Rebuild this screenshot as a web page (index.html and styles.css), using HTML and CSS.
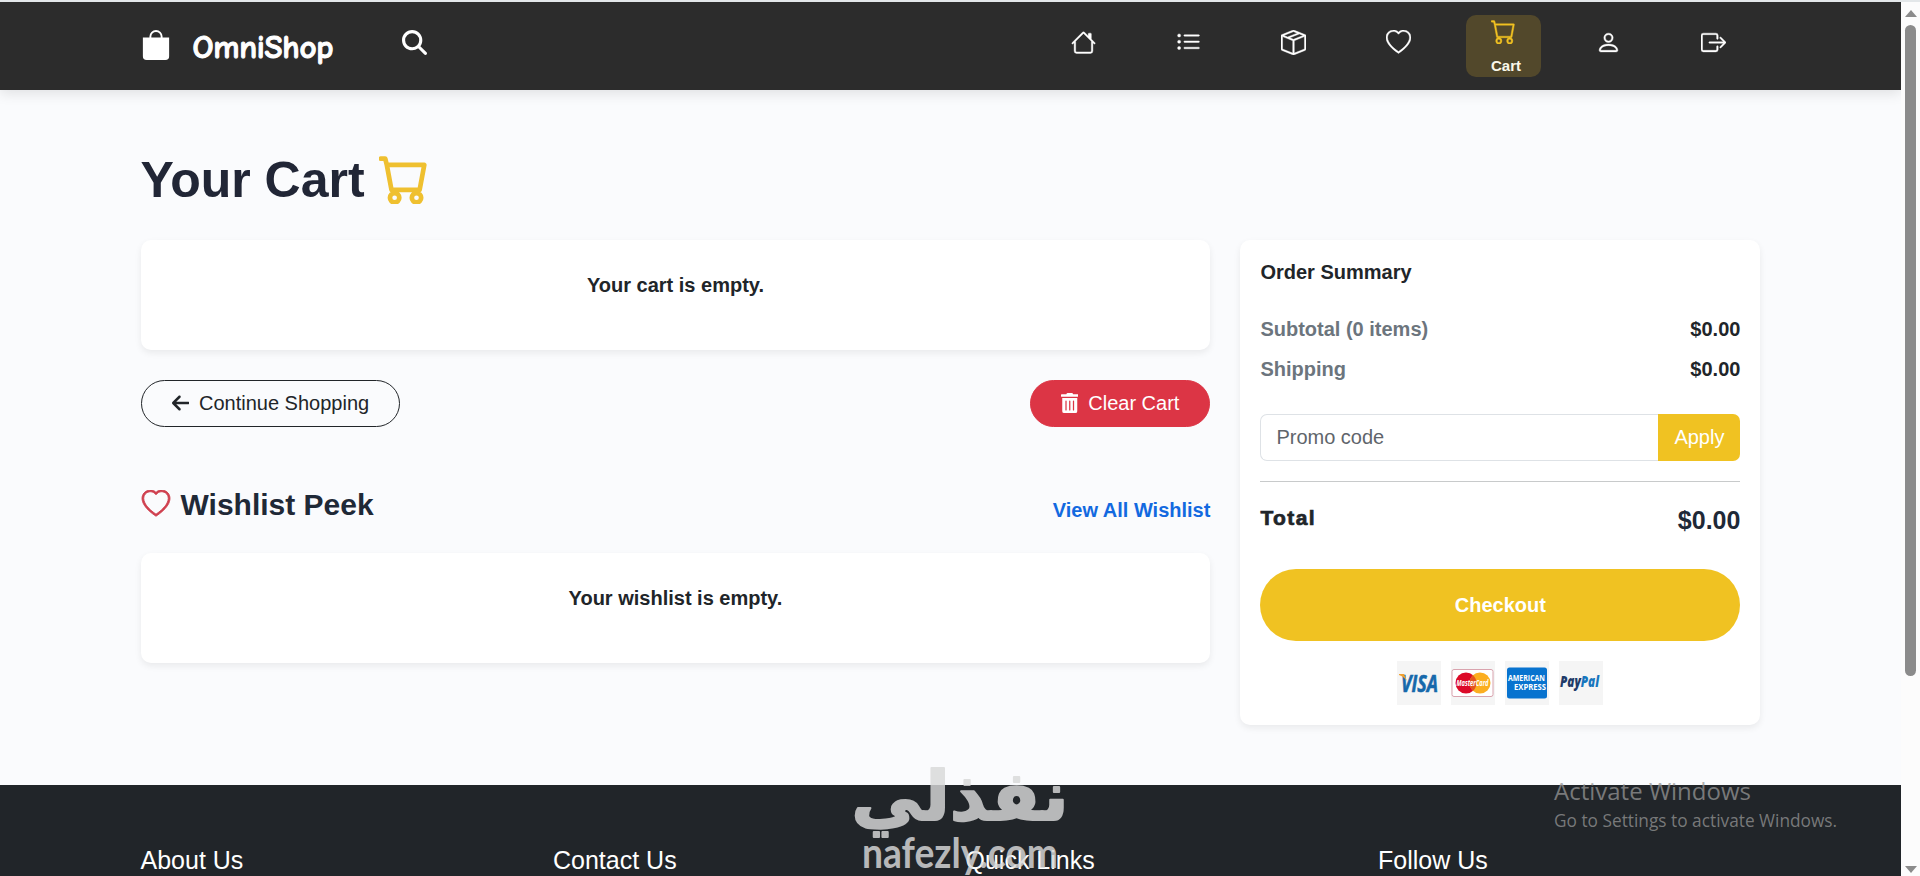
FILE: index.html
```
<!DOCTYPE html>
<html lang="en">
<head>
    <meta charset="UTF-8">
    <meta name="viewport" content="width=device-width, initial-scale=1.0">
    <title>OmniShop - Cart</title>
    <link rel="stylesheet" href="styles.css">
</head>
<body>
    <div class="page">
        <header class="navbar">
            <div class="container nav-inner">
                <a class="brand" href="#">
                    <svg class="brand-icon" viewBox="0 0 16 16"><path d="M8 1a2.500 2.500 0 0 1 2.500 2.500V4h-5v-.5A2.500 2.500 0 0 1 8 1m3.500 3v-.5a3.500 3.500 0 1 0-7 0V4H1v10a2 2 0 0 0 2 2h10a2 2 0 0 0 2-2V4z"/></svg>
                    <span class="brand-name">OmniShop</span>
                </a>
                <svg class="search" viewBox="0 0 512 512"><path d="M416 208c0 45.900-14.900 88.300-40 122.700L502.600 457.400c12.500 12.500 12.500 32.800 0 45.300s-32.800 12.500-45.300 0L330.700 376c-34.400 25.200-76.800 40-122.700 40C93.100 416 0 322.900 0 208S93.100 0 208 0S416 93.100 416 208zM208 352a144 144 0 1 0 0-288 144 144 0 1 0 0 288z"/></svg>
                <nav class="nav-links">
                    <a class="nav-item" href="#">
                        <svg viewBox="0 0 16 16"><path d="M8.707 1.500a1 1 0 0 0-1.414 0L.646 8.146a.5.5 0 0 0 .708.708L2 8.207V13.500A1.500 1.500 0 0 0 3.500 15h9a1.500 1.500 0 0 0 1.500-1.500V8.207l.646.647a.5.5 0 0 0 .708-.708L13 5.793V2.500a.5.5 0 0 0-.5-.5h-1a.5.5 0 0 0-.5.5v1.293zM13 7.207V13.500a.5.5 0 0 1-.5.5h-9a.5.5 0 0 1-.5-.5V7.207l5-5z"/></svg>
                    </a>
                    <a class="nav-item" href="#">
                        <svg viewBox="0 0 16 16"><path d="M5 11.500a.5.5 0 0 1 .5-.5h9a.5.5 0 0 1 0 1h-9a.5.5 0 0 1-.5-.5m0-4a.5.5 0 0 1 .5-.5h9a.5.5 0 0 1 0 1h-9a.5.5 0 0 1-.5-.5m0-4a.5.5 0 0 1 .5-.5h9a.5.5 0 0 1 0 1h-9a.5.5 0 0 1-.5-.5m-3 1a1 1 0 1 0 0-2 1 1 0 0 0 0 2m0 4a1 1 0 1 0 0-2 1 1 0 0 0 0 2m0 4a1 1 0 1 0 0-2 1 1 0 0 0 0 2"/></svg>
                    </a>
                    <a class="nav-item" href="#">
                        <svg viewBox="0 0 16 16"><path d="M8.186 1.113a.5.5 0 0 0-.372 0L1.846 3.500l2.404.961L10.404 2zm3.564 1.426L5.596 5 8 5.961 14.154 3.500zm3.250 1.700-6.500 2.600v7.922l6.500-2.600V4.240zM7.500 14.762V6.838L1 4.239v7.923zM7.443.184a1.500 1.500 0 0 1 1.114 0l7.129 2.852A.5.5 0 0 1 16 3.500v8.662a1 1 0 0 1-.629.928l-7.185 2.874a.5.5 0 0 1-.372 0L.63 13.090a1 1 0 0 1-.63-.928V3.500a.5.5 0 0 1 .314-.464z"/></svg>
                    </a>
                    <a class="nav-item" href="#">
                        <svg viewBox="0 0 16 16"><path d="m8 2.748-.717-.737C5.600.281 2.514.878 1.400 3.053c-.523 1.023-.641 2.500.314 4.385.920 1.815 2.834 3.989 6.286 6.357 3.452-2.368 5.365-4.542 6.286-6.357.955-1.886.838-3.362.314-4.385C13.486.878 10.400.280 8.717 2.010zM8 15C-7.333 4.868 3.279-3.040 7.824 1.143q.09.083.176.171a3 3 0 0 1 .176-.17C12.720-3.042 23.333 4.867 8 15"/></svg>
                    </a>
                    <a class="nav-item active" href="#">
                        <svg viewBox="0 0 16 16"><path d="M0 1.500A.5.5 0 0 1 .5 1H2a.5.5 0 0 1 .485.379L2.890 3H14.500a.5.5 0 0 1 .491.592l-1.500 8A.5.5 0 0 1 13 12H4a.5.5 0 0 1-.491-.408L2.010 3.607 1.610 2H.5a.5.5 0 0 1-.5-.5M3.102 4l1.313 7h8.170l1.313-7zM5 12a2 2 0 1 0 0 4 2 2 0 0 0 0-4m7 0a2 2 0 1 0 0 4 2 2 0 0 0 0-4m-7 1a1 1 0 1 1 0 2 1 1 0 0 1 0-2m7 0a1 1 0 1 1 0 2 1 1 0 0 1 0-2"/></svg>
                        <span class="nav-label">Cart</span>
                    </a>
                    <a class="nav-item" href="#">
                        <svg viewBox="0 0 16 16"><path d="M8 8a3 3 0 1 0 0-6 3 3 0 0 0 0 6m2-3a2 2 0 1 1-4 0 2 2 0 0 1 4 0m4 8c0 1-1 1-1 1H3s-1 0-1-1 1-4 6-4 6 3 6 4m-1-.004c-.001-.246-.154-.986-.832-1.664C11.516 10.680 10.289 10 8 10s-3.516.680-4.168 1.332c-.678.678-.830 1.418-.832 1.664z"/></svg>
                    </a>
                    <a class="nav-item" href="#">
                        <svg viewBox="0 0 16 16"><path d="M10 12.500a.5.5 0 0 1-.5.5h-8a.5.5 0 0 1-.5-.5v-9a.5.5 0 0 1 .5-.5h8a.5.5 0 0 1 .5.5v2a.5.5 0 0 0 1 0v-2A1.500 1.500 0 0 0 9.500 2h-8A1.500 1.500 0 0 0 0 3.500v9A1.500 1.500 0 0 0 1.500 14h8a1.500 1.500 0 0 0 1.500-1.500v-2a.5.5 0 0 0-1 0z"/><path d="M15.854 8.354a.5.5 0 0 0 0-.708l-3-3a.5.5 0 0 0-.708.708L14.293 7.500H5.500a.5.5 0 0 0 0 1h8.793l-2.147 2.146a.5.5 0 0 0 .708.708z"/></svg>
                    </a>
                </nav>
            </div>
        </header>

        <main class="container main">
            <h1 class="page-title">
                Your Cart
                <svg class="title-icon" viewBox="0 0 16 16"><path d="M0 1.500A.5.5 0 0 1 .5 1H2a.5.5 0 0 1 .485.379L2.890 3H14.500a.5.5 0 0 1 .491.592l-1.500 8A.5.5 0 0 1 13 12H4a.5.5 0 0 1-.491-.408L2.010 3.607 1.610 2H.5a.5.5 0 0 1-.5-.5M3.102 4l1.313 7h8.170l1.313-7zM5 12a2 2 0 1 0 0 4 2 2 0 0 0 0-4m7 0a2 2 0 1 0 0 4 2 2 0 0 0 0-4m-7 1a1 1 0 1 1 0 2 1 1 0 0 1 0-2m7 0a1 1 0 1 1 0 2 1 1 0 0 1 0-2"/></svg>
            </h1>

            <div class="columns">
                <section class="cart-column">
                    <div class="card empty-card">Your cart is empty.</div>

                    <div class="cart-actions">
                        <button class="button outline">
                            <svg viewBox="0 0 448 512"><path d="M9.400 233.400c-12.500 12.500-12.500 32.800 0 45.300l160 160c12.500 12.500 32.800 12.500 45.300 0s12.500-32.800 0-45.300L109.200 288 416 288c17.700 0 32-14.300 32-32s-14.300-32-32-32l-306.700 0L214.600 118.600c12.500-12.500 12.500-32.800 0-45.300s-32.800-12.500-45.300 0l-160 160z"/></svg>
                            Continue Shopping
                        </button>
                        <button class="button danger">
                            <svg viewBox="0 0 448 512"><path d="M32 464a48 48 0 0 0 48 48h288a48 48 0 0 0 48-48V128H32zm272-256a16 16 0 0 1 32 0v224a16 16 0 0 1-32 0zm-96 0a16 16 0 0 1 32 0v224a16 16 0 0 1-32 0zm-96 0a16 16 0 0 1 32 0v224a16 16 0 0 1-32 0zM432 32H312l-9.400-18.700A24 24 0 0 0 281.100 0H166.800a23.720 23.720 0 0 0-21.400 13.300L136 32H16A16 16 0 0 0 0 48v32a16 16 0 0 0 16 16h416a16 16 0 0 0 16-16V48a16 16 0 0 0-16-16z"/></svg>
                            Clear Cart
                        </button>
                    </div>

                    <div class="wishlist-header">
                        <h2 class="wishlist-title">
                            <svg viewBox="0 0 16 16"><path d="m8 2.748-.717-.737C5.600.281 2.514.878 1.400 3.053c-.523 1.023-.641 2.500.314 4.385.920 1.815 2.834 3.989 6.286 6.357 3.452-2.368 5.365-4.542 6.286-6.357.955-1.886.838-3.362.314-4.385C13.486.878 10.400.280 8.717 2.010zM8 15C-7.333 4.868 3.279-3.040 7.824 1.143q.09.083.176.171a3 3 0 0 1 .176-.17C12.720-3.042 23.333 4.867 8 15"/></svg>
                            Wishlist Peek
                        </h2>
                        <a class="view-all" href="#">View All Wishlist</a>
                    </div>
                    <div class="card empty-card">Your wishlist is empty.</div>
                </section>

                <aside class="card summary">
                    <h3 class="summary-title">Order Summary</h3>
                    <div class="summary-row">
                        <span class="muted">Subtotal (0 items)</span>
                        <span>$0.00</span>
                    </div>
                    <div class="summary-row">
                        <span class="muted">Shipping</span>
                        <span>$0.00</span>
                    </div>
                    <div class="promo">
                        <input type="text" class="promo-input" placeholder="Promo code">
                        <button class="promo-button">Apply</button>
                    </div>
                    <div class="total-row">
                        <span class="total-label">Total</span>
                        <span class="total-value">$0.00</span>
                    </div>
                    <button class="checkout">Checkout</button>
                    <div class="payments">
                        <svg class="payment" viewBox="0 0 44 44">
                            <text class="pay-text visa" x="4" y="31" textLength="37" lengthAdjust="spacingAndGlyphs">VISA</text>
                            <path fill="#f0a030" d="M2 13h5l3 7c-2-3-5-5-8-6z"/>
                        </svg>
                        <svg class="payment" viewBox="0 0 44 44">
                            <rect x="1" y="8.500" width="41" height="27" rx="2" fill="#fff" stroke="#d9a3ae"/>
                            <circle cx="15" cy="22" r="10.500" fill="#dc0a28"/>
                            <circle cx="29" cy="22" r="10.500" fill="#fbae20"/>
                            <path fill="#e4541f" d="M22 14.200a10.500 10.500 0 0 1 0 15.600a10.500 10.500 0 0 1 0-15.600"/>
                            <text class="pay-text master" x="5.500" y="25" textLength="32" lengthAdjust="spacingAndGlyphs">MasterCard</text>
                        </svg>
                        <svg class="payment" viewBox="0 0 44 44">
                            <rect x="2" y="6.500" width="40" height="31" rx="2.500" fill="#0873cf"/>
                            <text class="pay-text amex" x="3" y="20" textLength="37" lengthAdjust="spacingAndGlyphs">AMERICAN</text>
                            <text class="pay-text amex" x="9" y="28.500" textLength="32" lengthAdjust="spacingAndGlyphs">EXPRESS</text>
                        </svg>
                        <svg class="payment" viewBox="0 0 44 44">
                            <text class="pay-text paypal" x="1" y="26" textLength="39" lengthAdjust="spacingAndGlyphs"><tspan fill="#203b68">Pay</tspan><tspan fill="#1775bd">Pal</tspan></text>
                        </svg>
                    </div>
                </aside>
            </div>
        </main>

        <footer class="footer">
            <div class="container footer-grid">
                <h4>About Us</h4>
                <h4>Contact Us</h4>
                <h4>Quick Links</h4>
                <h4>Follow Us</h4>
            </div>
        </footer>
    </div>

    <div class="scrollbar">
        <span class="arrow-up"></span>
        <span class="thumb"></span>
        <span class="arrow-down"></span>
    </div>

    <svg class="watermark" viewBox="0 0 220 116">
        <text class="watermark-ar" transform="translate(108 60) scale(1.03 1)" direction="rtl" text-anchor="middle">نفذلي</text>
        <text class="watermark-en" x="10" y="108" textLength="196" lengthAdjust="spacingAndGlyphs">nafezly.com</text>
    </svg>

    <div class="activate">
        <div class="activate-title">Activate Windows</div>
        <div class="activate-text">Go to Settings to activate Windows.</div>
    </div>
</body>
</html>
```
FILE: styles.css
```
* {
    box-sizing: border-box;
}

body {
    font-family: "Liberation Sans", Arial, sans-serif;
    font-size: 20px;
    line-height: 30px;
    color: #212529;
    background-color: #fafbfd;
    display: flex;
    height: 876px;
    margin: 0;
    overflow: hidden;
    border-top: 2px solid #e3e7e9;
    position: relative;
}

h1, h2, h3, h4 {
    margin: 0;
}

a {
    text-decoration: none;
}

svg {
    fill: currentColor;
    flex-shrink: 0;
}

button, input {
    font-family: inherit;
    font-size: 20px;
    line-height: 30px;
}

.page {
    flex: 1;
}

.container {
    width: 1650px;
    margin: 0 auto;
    padding: 0 15px;
}

/* Navbar */
.navbar {
    height: 88px;
    background-color: #2c2c2c;
    color: white;
    box-shadow: 0 4px 12px rgba(0,0,0,0.1);
}

.nav-inner {
    display: flex;
    align-items: flex-start;
    padding-top: 13px;
}

.brand {
    display: flex;
    gap: 22px;
    color: white;
    padding-top: 15px;
}

.brand-icon {
    width: 30px;
    height: 30px;
}

.brand-name {
    font-family: "Comic Neue", "Lato", sans-serif;
    font-size: 33px;
    font-weight: 900;
    line-height: 34px;
    width: 144px;
    letter-spacing: -0.3px;
    -webkit-text-stroke: 1px white;
}

.search {
    width: 25px;
    height: 25px;
    margin: 15px 0 0 65px;
}

.nav-links {
    display: flex;
    gap: 30px;
    margin-left: auto;
    margin-right: 10px;
}

.nav-item {
    width: 75px;
    height: 62px;
    border-radius: 10px;
    display: flex;
    flex-direction: column;
    align-items: center;
    padding-top: 15px;
    color: white;
}

.nav-item svg {
    width: 25px;
    height: 25px;
    stroke: currentColor;
    stroke-width: 0.25px;
}

.nav-item.active {
    background-color: #52482b;
    padding-top: 4px;
}

.nav-item.active svg {
    color: #f1c222;
}

.nav-label {
    font-size: 15px;
    font-weight: bold;
    line-height: 20px;
    margin: 12px 0 0 6px;
    color: #fbf8ea;
}

/* Main */
.main {
    padding-top: 60px;
    padding-bottom: 60px;
}

.page-title {
    display: flex;
    gap: 14px;
    font-size: 50px;
    line-height: 60px;
    color: #212636;
    margin-bottom: 30px;
}

.title-icon {
    width: 50px;
    height: 50px;
    margin-top: 4px;
    color: #efc030;
    stroke: currentColor;
    stroke-width: 0.5px;
}

.columns {
    display: grid;
    grid-template-columns: 1069.9px 520px;
    gap: 30px;
    align-items: start;
}

.card {
    background-color: white;
    border-radius: 10px;
    box-shadow: 0 3px 7px rgba(0,0,0,0.07);
}

.empty-card {
    height: 110px;
    padding: 30px;
    text-align: center;
    font-weight: bold;
}

.cart-actions {
    display: flex;
    justify-content: space-between;
    margin: 30px 0 60px;
}

.button {
    display: flex;
    align-items: center;
    gap: 10px;
    height: 47px;
    padding: 0 30px 2px;
    border: 1px solid #212529;
    border-radius: 24px;
    cursor: pointer;
}

.button svg {
    width: 17.5px;
    height: 20px;
}

.button.outline {
    background-color: transparent;
    color: #212529;
}

.button.danger {
    background-color: #dc3545;
    border-color: #dc3545;
    color: white;
}

.wishlist-header {
    display: flex;
    justify-content: space-between;
    margin-bottom: 30px;
}

.wishlist-title {
    display: flex;
    gap: 10px;
    font-size: 30px;
    line-height: 36px;
    color: #1f2937;
}

.wishlist-title svg {
    width: 30px;
    height: 28px;
    margin-top: 3px;
    color: #cf3f4e;
    stroke: currentColor;
    stroke-width: 0.5px;
}

.view-all {
    height: 28px;
    margin-top: 8px;
    color: #1269e0;
    font-weight: bold;
}

/* Order summary */
.summary {
    padding: 20px;
    height: 485px;
}

.summary-title {
    font-size: 20px;
    line-height: 24px;
    margin-bottom: 30px;
}

.summary-row {
    display: flex;
    justify-content: space-between;
    font-weight: bold;
    margin-bottom: 10px;
}

.muted {
    color: #6c757d;
}

.promo {
    display: flex;
    margin: 30px 0 20px;
}

.promo-input {
    flex: 1;
    min-width: 0;
    height: 47px;
    padding: 0 15px;
    border: 1px solid #dee2e6;
    border-right: none;
    border-radius: 7px 0 0 7px;
}

.promo-input::placeholder {
    color: #5f656b;
}

.promo-button {
    width: 82px;
    padding: 0 0 2px;
    border: none;
    border-radius: 0 7px 7px 0;
    background-color: #f0c222;
    color: white;
}

.total-row {
    display: flex;
    justify-content: space-between;
    border-top: 1px solid #c8cacb;
    padding-top: 21px;
    height: 88px;
}

.total-label {
    font-size: 21px;
    font-weight: bold;
    letter-spacing: 1.4px;
    -webkit-text-stroke: 0.7px;
}

.total-value {
    font-size: 25px;
    font-weight: bold;
    line-height: 34px;
    color: #1f2937;
}

.checkout {
    width: 100%;
    height: 72px;
    border: none;
    border-radius: 36px;
    background-color: #f0c222;
    color: white;
    font-weight: bold;
    cursor: pointer;
}

.payments {
    display: flex;
    justify-content: center;
    gap: 10px;
    margin-top: 20px;
}

.payment {
    width: 44px;
    height: 44px;
    background-color: #f5f5f5;
    overflow: visible;
}

.pay-text {
    font-family: "Open Sans", sans-serif;
    font-weight: bold;
}

.visa {
    font-size: 24px;
    font-style: italic;
    fill: #1668ab;
    stroke: #1668ab;
    stroke-width: 0.6px;
}

.master {
    font-size: 8px;
    font-style: italic;
    fill: white;
}

.amex {
    font-size: 8px;
    fill: white;
}

.paypal {
    font-size: 16px;
    font-style: italic;
    font-weight: 800;
}

/* Footer */
.footer {
    height: 91px;
    background-color: #212529;
    color: white;
    padding-top: 60px;
}

.footer-grid {
    display: grid;
    grid-template-columns: repeat(4, 412.5px);
}

.footer-grid h4 {
    font-size: 25px;
    font-weight: normal;
}

/* Scrollbar */
.scrollbar {
    width: 19px;
    background-color: #fcfcfc;
    display: flex;
    flex-direction: column;
    align-items: center;
}

.arrow-up,
.arrow-down {
    border: 6px solid transparent;
}

.arrow-up {
    border-bottom: 7px solid #8b8b8b;
    border-top: none;
    margin-top: 8px;
}

.arrow-down {
    border-top: 7px solid #8b8b8b;
    border-bottom: none;
    margin: auto 0 3px;
}

.thumb {
    width: 11px;
    height: 651px;
    margin-top: 8px;
    border-radius: 6px;
    background-color: #8b8b8b;
}

/* Overlays */
.watermark {
    position: absolute;
    left: 852px;
    top: 758px;
    width: 220px;
    height: 116px;
    overflow: visible;
    fill: #d9d9d9;
    opacity: 0.82;
}

.watermark-ar {
    font-family: "DejaVu Sans", sans-serif;
    font-size: 69px;
    font-weight: bold;
    stroke: #d9d9d9;
    stroke-width: 2px;
    stroke-linejoin: round;
}

.watermark-en {
    font-family: "Lato", sans-serif;
    font-size: 42px;
    font-weight: bold;
}

.activate {
    position: absolute;
    left: 1554px;
    top: 773px;
    font-family: "Open Sans", sans-serif;
    color: rgba(150,150,150,0.75);
    white-space: nowrap;
}

.activate-title {
    font-size: 24px;
    line-height: 32px;
}

.activate-text {
    font-size: 17.3px;
    line-height: 27px;
}
```
